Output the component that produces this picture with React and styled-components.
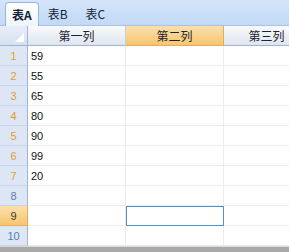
import styled, { createGlobalStyle } from 'styled-components';

const GlobalStyle = createGlobalStyle`
  html, body { margin: 0; padding: 0; background: #ffffff; }
  body { font-family: "Liberation Sans", "Noto Sans CJK SC", sans-serif; }
`;

const Frame = styled.div`
  width: 289px;
  height: 252px;
  display: flex;
  flex-direction: column;
  overflow: hidden;
  background: #ffffff;
`;

const TabBar = styled.div`
  height: 27px;
  box-sizing: border-box;
  display: flex;
  align-items: flex-end;
  padding-left: 5px;
  background: linear-gradient(#d4e5fa, #c2d9f5);
  border-bottom: 1px solid #a9c4e6;
`;

const Tab = styled.div`
  height: ${(p) => (p.active ? '24px' : '22px')};
  box-sizing: border-box;
  padding: 0 ${(p) => (p.active ? '6px' : '8px')};
  margin-bottom: ${(p) => (p.active ? '-1px' : '1px')};
  display: flex;
  align-items: center;
  font-family: "Noto Sans CJK SC", sans-serif;
  font-size: 12px;
  font-weight: ${(p) => (p.active ? 700 : 400)};
  color: #15233a;
  border-radius: 4px 4px 0 0;
  background: ${(p) => (p.active ? 'linear-gradient(#ffffff, #eef4fc)' : 'transparent')};
  border: 1px solid ${(p) => (p.active ? '#94b6e2' : 'transparent')};
  border-bottom: none;
`;

const Grid = styled.div`
  flex: 1;
  display: grid;
  grid-template-columns: 28px 98px 98px 86px;
  grid-auto-rows: 20px;
  align-content: start;
`;

const Corner = styled.div`
  position: relative;
  box-sizing: border-box;
  background: linear-gradient(#e8eef7, #d6e1f0);
  border-right: 1px solid #9fb5d6;
  border-bottom: 1px solid #9fb5d6;
`;

const CornerMark = styled.div`
  position: absolute;
  right: 3px;
  bottom: 3px;
  width: 0;
  height: 0;
  border-left: 9px solid transparent;
  border-bottom: 9px solid #ffffff;
`;

const ColHead = styled.div`
  box-sizing: border-box;
  display: flex;
  align-items: center;
  justify-content: center;
  font-family: "Noto Sans CJK SC", sans-serif;
  font-size: 12px;
  color: #1b2430;
  background: ${(p) =>
    p.selected
      ? 'linear-gradient(#fbe0ad, #f6c56f)'
      : 'linear-gradient(#f9fafc, #dfe5ee)'};
  border-right: 1px solid ${(p) => (p.selected ? '#e6ac52' : '#c5cfdd')};
  border-bottom: 1px solid ${(p) => (p.selected ? '#e6ac52' : '#9fb5d6')};
  white-space: nowrap;
  overflow: hidden;
`;

const RowHead = styled.div`
  box-sizing: border-box;
  display: flex;
  align-items: center;
  justify-content: center;
  font-family: "Liberation Sans", sans-serif;
  font-size: 11px;
  color: ${(p) => (p.selected ? '#3b3b3b' : p.filled ? '#e0a030' : '#5f7ca8')};
  background: ${(p) =>
    p.selected ? 'linear-gradient(#fbe0ad, #f6c66f)' : '#dce6f4'};
  border-right: 1px solid ${(p) => (p.selected ? '#e6ac52' : '#9fb5d6')};
  border-bottom: 1px solid ${(p) => (p.selected ? '#e6ac52' : '#c9d6e8')};
`;

const Cell = styled.div`
  box-sizing: border-box;
  display: flex;
  align-items: center;
  padding-left: 3px;
  font-family: "Liberation Sans", sans-serif;
  font-size: 11px;
  color: #111111;
  border-right: 1px solid #ececec;
  border-bottom: 1px solid #ececec;
  ${(p) => p.active && 'outline: 1px solid #4f8fd4; outline-offset: -1px;'}
`;

const BottomBar = styled.div`
  height: 5px;
  border-top: 1px solid #d9d9d9;
  background: #a9a9a9;
`;

const values = ['59', '55', '65', '80', '90', '99', '20', '', '', ''];

export default function App() {
  return (
    <Frame>
      <GlobalStyle />
      <TabBar>
        <Tab active>表A</Tab>
        <Tab>表B</Tab>
        <Tab>表C</Tab>
      </TabBar>
      <Grid>
        <Corner>
          <CornerMark />
        </Corner>
        <ColHead>第一列</ColHead>
        <ColHead selected>第二列</ColHead>
        <ColHead>第三列</ColHead>
        {values.map((v, i) => [
          <RowHead key={`h${i}`} filled={v !== ''} selected={i === 8}>
            {i + 1}
          </RowHead>,
          <Cell key={`a${i}`}>{v}</Cell>,
          <Cell key={`b${i}`} active={i === 8} />,
          <Cell key={`c${i}`} />,
        ])}
      </Grid>
      <BottomBar />
    </Frame>
  );
}
